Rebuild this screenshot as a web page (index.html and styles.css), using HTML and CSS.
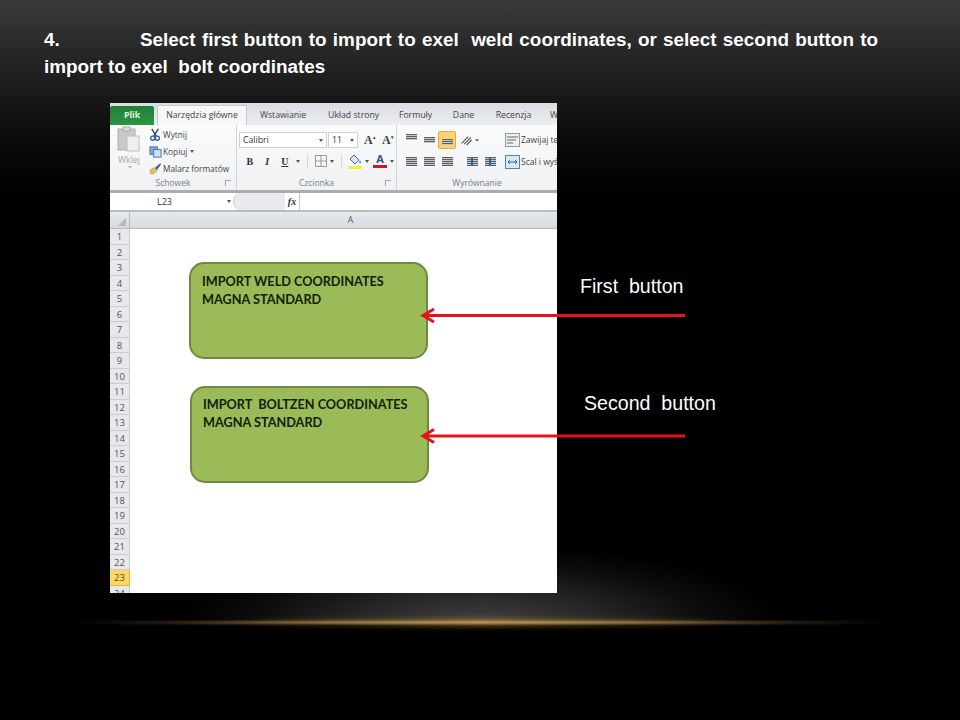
FILE: index.html
```html
<!DOCTYPE html>
<html lang="pl">
<head>
    <meta charset="UTF-8">
    <title>Import coordinates</title>
    <link rel="stylesheet" href="styles.css">
</head>
<body>

<div class="slide">
    <div class="glow"></div>
    <div class="gold-line"></div>

    <h1 class="heading"><span class="step">4.</span>Select first button to import to exel&nbsp; weld coordinates, or select second button to import to exel&nbsp; bolt coordinates</h1>

    <div class="excel">
        <div class="tabs">
            <span class="tab tab-file">Plik</span>
            <span class="tab tab-active">Narzędzia główne</span>
            <span class="tab tab-insert">Wstawianie</span>
            <span class="tab tab-layout">Układ strony</span>
            <span class="tab tab-formula">Formuły</span>
            <span class="tab tab-data">Dane</span>
            <span class="tab tab-review">Recenzja</span>
            <span class="tab tab-view">W</span>
        </div>

        <div class="ribbon">
            <div class="group group-clipboard">
                <div class="group-body clipboard">
                    <div class="paste">
                        <svg width="24" height="26" viewBox="0 0 24 26">
                            <rect x="1" y="3" width="17" height="21" fill="#c9c9c9" stroke="#b0b0b0"/>
                            <rect x="6" y="1" width="7" height="4" fill="#dedede" stroke="#aaa"/>
                            <rect x="10" y="10" width="12" height="15" fill="#efefef" stroke="#bdbdbd"/>
                        </svg>
                        <span class="paste-label">Wklej</span>
                        <span class="caret caret-light"></span>
                    </div>
                    <div class="clip-list">
                        <div class="clip-row">
                            <svg width="13" height="13" viewBox="0 0 14 14"><path d="M3 1l5 8M10 1L5 9" stroke="#3d4f6b" stroke-width="1.6" fill="none"/><circle cx="4" cy="11" r="2.200" fill="none" stroke="#2f5fa8" stroke-width="1.400"/><circle cx="9" cy="11" r="2.200" fill="none" stroke="#2f5fa8" stroke-width="1.400"/></svg>
                            Wytnij
                        </div>
                        <div class="clip-row">
                            <svg width="13" height="13" viewBox="0 0 14 14"><rect x="1" y="2" width="8" height="8" fill="#7fa8dc" stroke="#3f6cae"/><rect x="5" y="5" width="8" height="8" fill="#cfe0f4" stroke="#3f6cae"/></svg>
                            Kopiuj <span class="caret"></span>
                        </div>
                        <div class="clip-row">
                            <svg width="13" height="13" viewBox="0 0 15 14"><path d="M1 9l5-3 3 4-4 3H2z" fill="#e4c35a" stroke="#a98a2c" stroke-width=".7"/><path d="M7 6l6-5 1 1-5 7z" fill="#3f5f8f"/></svg>
                            Malarz formatów
                        </div>
                    </div>
                </div>
                <div class="group-label">Schowek<span class="launcher"></span></div>
            </div>

            <div class="group group-font">
                <div class="group-body font-body">
                    <div class="font-row">
                        <span class="combo combo-font">Calibri<span class="caret"></span></span>
                        <span class="combo combo-size">11<span class="caret"></span></span>
                        <span class="grow-a">A<sup>▴</sup></span>
                        <span class="shrink-a">A<sup>▾</sup></span>
                    </div>
                    <div class="font-row format-row">
                        <span class="fmt fmt-b">B</span>
                        <span class="fmt fmt-i">I</span>
                        <span class="fmt fmt-u">U</span>
                        <span class="caret"></span>
                        <span class="sep"></span>
                        <svg class="borders" width="14" height="14" viewBox="0 0 14 14"><path d="M1.500 1.500h11v11h-11zM7 1.500v11M1.500 7h11" fill="none" stroke="#9a9a9a"/></svg>
                        <span class="caret"></span>
                        <span class="sep"></span>
                        <span class="swatch">
                            <svg width="14" height="11" viewBox="0 0 14 11"><path d="M6 1l5 5-4 4-5-5z" fill="#dfe8f2" stroke="#4a6a94"/><path d="M12 6c1 1.600 1.400 3 .2 3.400-1 .2-1.200-1.600-.2-3.400z" fill="#4a7fc0"/></svg>
                            <i class="swatch-yellow"></i>
                        </span>
                        <span class="caret"></span>
                        <span class="swatch">
                            <b class="color-a">A</b>
                            <i class="swatch-red"></i>
                        </span>
                        <span class="caret"></span>
                    </div>
                </div>
                <div class="group-label">Czcionka<span class="launcher"></span></div>
            </div>

            <div class="group group-align">
                <div class="group-body align-body">
                    <div class="align-row">
                        <span class="ico"><i class="bars bars-top"></i></span>
                        <span class="ico"><i class="bars bars-mid"></i></span>
                        <span class="ico ico-on"><i class="bars bars-bottom"></i></span>
                        <svg class="orient" width="20" height="14" viewBox="0 0 24 14"><path d="M2 11l8-8M5 12l8-8M8 13l6-6" stroke="#555" stroke-width="1.300" fill="none"/><path d="M18 6h5l-2.500 3z" fill="#666"/></svg>
                        <svg class="wide-ico" width="15" height="14" viewBox="0 0 15 14"><rect x=".5" y=".5" width="14" height="13" fill="#eef1f4" stroke="#8f98a3"/><path d="M2 4h11M2 7h9M2 10h6" stroke="#666"/></svg>
                        <span class="wide-text">Zawijaj tekst</span>
                    </div>
                    <div class="align-row">
                        <span class="ico"><i class="bars"></i></span>
                        <span class="ico"><i class="bars"></i></span>
                        <span class="ico"><i class="bars"></i></span>
                        <span class="ico ico-indent"><i class="bars bars-indent"></i></span>
                        <span class="ico"><i class="bars bars-indent"></i></span>
                        <svg class="wide-ico merge-ico" width="15" height="14" viewBox="0 0 15 14"><rect x=".5" y=".5" width="14" height="13" fill="#dbe7f5" stroke="#5d7fae"/><path d="M3 7h9M3 7l2-2M3 7l2 2M12 7l-2-2M12 7l-2 2" stroke="#2f5fa8" fill="none"/></svg>
                        <span class="wide-text">Scal i wyśrodkuj</span>
                    </div>
                </div>
                <div class="group-label">Wyrównanie</div>
            </div>
        </div>

        <div class="formula-bar">
            <div class="name-box">L23<span class="caret caret-dark"></span></div>
            <div class="fx-box"></div>
            <span class="fx">fx</span>
            <div class="formula-input"></div>
        </div>

        <div class="col-header">
            <span class="corner"><i></i></span>
            <span class="col-a">A</span>
        </div>

        <div class="sheet">
            <div class="row-heads" id="rows"></div>
            <div class="cells">
                <div class="macro-btn macro-first">IMPORT WELD COORDINATES<br>MAGNA STANDARD</div>
                <div class="macro-btn macro-second">IMPORT&nbsp; BOLTZEN COORDINATES<br>MAGNA STANDARD</div>
            </div>
        </div>
    </div>

    <svg class="arrows" width="960" height="720" viewBox="0 0 960 720">
        <g stroke="#e8101a" stroke-width="3" fill="none">
            <path d="M685 315.500H423M434 309l-11 6.500 11 6.500"/>
            <path d="M685 436H423M434 429.500l-11 6.500 11 6.500"/>
        </g>
    </svg>

    <span class="callout callout-first">First&nbsp; button</span>
    <span class="callout callout-second">Second&nbsp; button</span>
</div>

<script>
    // row numbers 1-24, row 23 is the selected one
    let rows = document.getElementById('rows');
    for (let i = 1; i <= 24; i++) {
        let cell = document.createElement('div');
        cell.className = i === 23 ? 'row-head row-selected' : 'row-head';
        cell.innerText = i;
        rows.appendChild(cell);
    }
</script>

</body>
</html>
```

FILE: styles.css
```css
* {
    box-sizing: border-box;
}
body {
    margin: 0;
    background: #000;
    font-family: 'Liberation Sans', Arial, sans-serif;
}
.slide {
    position: relative;
    width: 960px;
    height: 720px;
    overflow: hidden;
    padding-top: 26px;
    background: linear-gradient(180deg, #3a3a3a 0, #262626 55px, #141414 110px, #070707 155px, #000 195px);
}
.glow {
    position: absolute;
    left: 180px;
    top: 545px;
    width: 600px;
    height: 78px;
    background: radial-gradient(ellipse 50% 100% at 50% 100%, #404040 0, #262626 40%, #0c0c0c 75%, transparent 100%);
}
.gold-line {
    position: absolute;
    left: 70px;
    top: 621px;
    width: 820px;
    height: 3px;
    filter: blur(0.8px);
    background: linear-gradient(90deg, transparent 0, #2e2414 12%, #8a6a35 27%, #e2bd76 50%, #8a6a35 73%, #2e2414 88%, transparent 100%);
}
.gold-line::before {
    content: "";
    position: absolute;
    left: 20%;
    right: 20%;
    top: -3px;
    height: 9px;
    filter: blur(2px);
    background: linear-gradient(90deg, transparent, rgba(170, 125, 55, 0.55) 50%, transparent);
}
.heading {
    position: relative;
    margin: 0 0 24px 44px;
    width: 834px;
    height: 53px;
    font-size: 18.9px;
    line-height: 27px;
    font-weight: bold;
    color: #fff;
    text-align: justify;
}
.step {
    display: inline-block;
    width: 96px;
}

/* excel window */
.excel {
    position: relative;
    margin-left: 110px;
    width: 447px;
    height: 490px;
    overflow: hidden;
    background: #fff;
    color: #444;
    font-size: 8.7px;
    font-family: 'Open Sans', Arial, sans-serif;
}
.tabs {
    display: flex;
    align-items: flex-end;
    height: 22px;
    white-space: nowrap;
    background: linear-gradient(180deg, #d9dde2, #eceef1);
}
.tab {
    height: 19px;
    line-height: 18px;
    text-align: center;
    flex: none;
}
.tab-file {
    width: 44px;
    background: linear-gradient(180deg, #1f7f36, #2f9445);
    color: #e6f5e8;
    font-weight: bold;
    border-radius: 2px 2px 0 0;
}
.tab-active {
    width: 90px;
    margin-left: 3px;
    height: 20px;
    background: #f6f7f8;
    border: 1px solid #c6cad0;
    border-bottom: none;
    border-radius: 2px 2px 0 0;
}
.tab-insert { width: 72px; }
.tab-layout { width: 69px; }
.tab-formula { width: 55px; }
.tab-data { width: 41px; }
.tab-review { width: 59px; }
.tab-view { width: 15px; padding-left: 7px; text-align: left; }

.ribbon {
    display: flex;
    height: 68px;
    background: linear-gradient(180deg, #fafbfb, #eff1f3);
    border-bottom: 3px solid #a9adb2;
}
.group {
    display: flex;
    flex-direction: column;
    flex: none;
    border-right: 1px solid #d2d5d9;
}
.group-clipboard { width: 127px; }
.group-font { width: 160px; }
.group-align { width: 160px; border-right: none; }
.group-body {
    flex: 1;
    min-height: 0;
}
.group-label {
    position: relative;
    height: 13px;
    line-height: 12px;
    font-size: 8.5px;
    text-align: center;
    color: #7b7f85;
}
.launcher {
    position: absolute;
    right: 5px;
    top: 3px;
    width: 6px;
    height: 6px;
    border: 1px solid #a5a9ae;
    border-width: 1px 0 0 1px;
}
.caret {
    display: inline-block;
    width: 0;
    height: 0;
    margin-left: 2px;
    vertical-align: middle;
    border: 2px solid transparent;
    border-top: 3px solid #555;
    border-bottom: none;
}
.caret-light {
    border-top-color: #bbb;
}

.clipboard {
    display: flex;
    padding: 1px 0 0 7px;
}
.paste {
    display: flex;
    flex-direction: column;
    align-items: center;
    width: 24px;
    color: #a4a6a9;
}
.paste-label {
    margin-top: 2px;
    line-height: 12px;
}
.clip-list {
    margin-left: 8px;
    white-space: nowrap;
}
.clip-row {
    display: flex;
    align-items: center;
    gap: 1px;
    height: 17px;
    font-size: 8.3px;
}

.font-body {
    padding: 7px 0 0 2px;
}
.font-row {
    display: flex;
    align-items: center;
    height: 16px;
}
.combo {
    display: flex;
    justify-content: space-between;
    align-items: center;
    height: 16px;
    padding: 0 3px;
    background: #fff;
    border: 1px solid #cfd2d6;
    color: #333;
}
.combo-font { width: 88px; }
.combo-size { width: 30px; margin-left: 1px; }
.grow-a, .shrink-a {
    margin-left: 6px;
    font: bold 12px 'Liberation Serif', serif;
    color: #3c4046;
    width: 12px;
}
.grow-a sup, .shrink-a sup {
    font-size: 5px;
    color: #555;
}
.format-row {
    margin-top: 5px;
    padding-left: 2px;
}
.fmt {
    width: 17.5px;
    text-align: center;
    font: bold 10px 'Liberation Serif', serif;
    color: #333;
}
.fmt-i { font-style: italic; }
.fmt-u { text-decoration: underline; }
.sep {
    width: 1px;
    height: 13px;
    margin: 0 6px 0 7px;
    background: #d3d6da;
}
.swatch {
    display: flex;
    flex-direction: column;
    align-items: center;
    width: 15px;
}
.swatch + .caret + .swatch {
    margin-left: 4px;
}
.swatch i {
    display: block;
    width: 14px;
    height: 3px;
    margin-top: 1px;
}
.swatch-yellow { background: #f5f035; }
.swatch-red { background: #d9141c; }
.color-a {
    line-height: 10px;
    font-size: 11px;
    color: #2d4f85;
}

.align-body {
    padding: 5px 0 0 5px;
}
.align-row {
    display: flex;
    align-items: center;
    height: 19px;
    white-space: nowrap;
    margin-bottom: 3px;
}
.align-row > * {
    flex: none;
}
.ico {
    display: flex;
    align-items: center;
    justify-content: center;
    width: 18px;
    height: 18px;
}
.ico-on {
    background: #fbd46f;
    border: 1px solid #e0ad3f;
    border-radius: 2px;
}
.ico-indent { margin-left: 7px; }
.bars {
    display: block;
    width: 11px;
    height: 9px;
    background: repeating-linear-gradient(180deg, #5c6065 0 1px, #c4c6c9 1px 2px);
}
.bars-top { height: 6px; margin-bottom: 5px; }
.bars-mid { height: 6px; }
.bars-bottom { height: 6px; margin-top: 5px; }
.bars-indent {
    background: linear-gradient(90deg, transparent 4px, #2f5fa8 4px 6px, transparent 6px), repeating-linear-gradient(180deg, #5c6065 0 1px, #c4c6c9 1px 2px);
}
.orient { margin-left: 4px; }
.wide-ico { margin-left: 25px; }
.merge-ico { margin-left: 6px; }
.wide-text {
    margin-left: 1px;
    font-size: 8.5px;
}

/* formula bar */
.formula-bar {
    display: flex;
    height: 19px;
    background: #fff;
    border-bottom: 2px solid #b9bdc3;
}
.name-box {
    position: relative;
    width: 123px;
    line-height: 17px;
    padding-left: 47px;
    font-size: 9px;
    color: #333;
}
.caret-dark {
    position: absolute;
    right: 2px;
    top: 7px;
}
.fx-box {
    width: 52px;
    background: #e8eaed;
    border-left: 1px solid #c8ccd1;
    border-radius: 8px 0 0 8px;
}
.fx {
    width: 14px;
    text-align: center;
    font: italic bold 10px/17px 'Liberation Serif', serif;
    color: #333;
}
.formula-input {
    flex: 1;
    border-left: 1px solid #c2c6cb;
}

.col-header {
    display: flex;
    height: 17px;
    background: linear-gradient(180deg, #e6e9ed, #d7dbe0);
    border-bottom: 1px solid #b7bbc1;
}
.corner {
    position: relative;
    width: 20px;
    border-right: 1px solid #b7bbc1;
}
.corner i {
    position: absolute;
    right: 3px;
    bottom: 2px;
    border: 4px solid transparent;
    border-right-color: #b4b8bd;
    border-bottom-color: #b4b8bd;
}
.col-a {
    flex: 1;
    padding-left: 14px;
    line-height: 16px;
    text-align: center;
    color: #555;
}

.sheet {
    display: flex;
}
.row-heads {
    flex: none;
    width: 20px;
}
.row-head {
    height: 15.5px;
    line-height: 15px;
    text-align: center;
    font-size: 9.5px;
    color: #555;
    background: #e6e8ec;
    border-bottom: 1px solid #c9ccd2;
    border-right: 1px solid #c9ccd2;
}
.row-selected {
    background: #fcd769;
    color: #6b4e10;
    border-color: #e0b040;
}
.cells {
    display: flex;
    flex-direction: column;
    align-items: flex-start;
}
.macro-btn {
    width: 239px;
    padding-left: 11px;
    font: bold 12.7px/18px Lato, 'Liberation Sans', sans-serif;
    color: #14200a;
    background: #9bbb59;
    border: 2px solid #71893f;
    border-radius: 15px;
    white-space: nowrap;
}
.macro-first {
    height: 97px;
    margin: 33px 0 0 59px;
    padding-top: 8px;
}
.macro-second {
    height: 97px;
    margin: 27px 0 0 60px;
    padding-top: 7px;
}

/* drawn over the slide */
.arrows {
    position: absolute;
    left: 0;
    top: 0;
}
.callout {
    position: absolute;
    font-size: 19.6px;
    color: #fff;
    white-space: nowrap;
}
.callout-first { left: 580px; top: 275px; }
.callout-second { left: 584px; top: 392px; }
```
